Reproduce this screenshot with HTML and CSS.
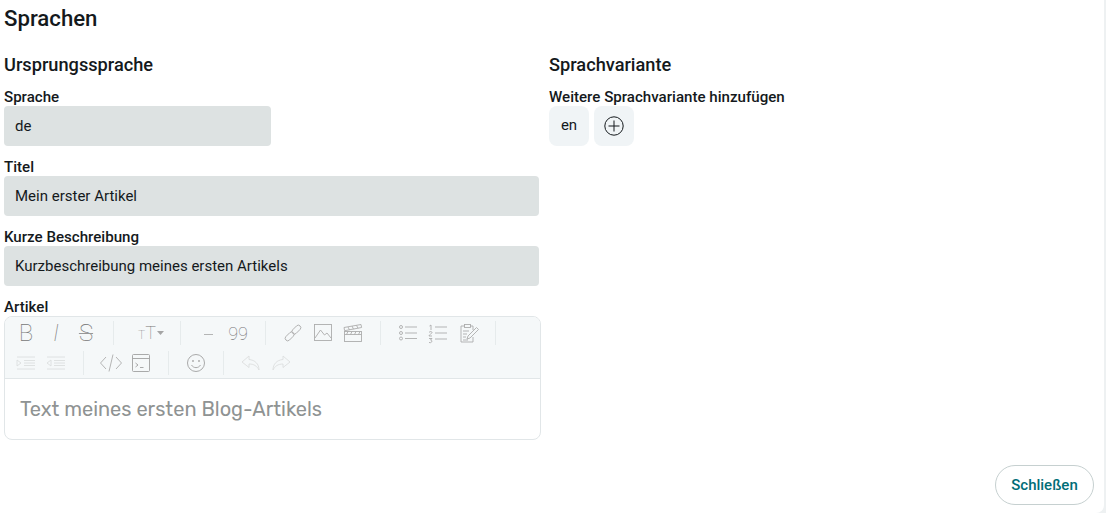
FILE: index.html
```html
<!DOCTYPE html>
<html lang="de">
<head>
<meta charset="utf-8">
<title>Sprachen</title>
<link rel="stylesheet" href="styles.css">
</head>
<body>
<main class="panel">
  <h1 class="title">Sprachen</h1>
  <div class="columns">
    <section class="col-left">
      <h2 class="section-title">Ursprungssprache</h2>
      <label class="label">Sprache</label>
      <input class="input input-short" value="de" readonly>
      <label class="label">Titel</label>
      <input class="input" value="Mein erster Artikel" readonly>
      <label class="label">Kurze Beschreibung</label>
      <input class="input" value="Kurzbeschreibung meines ersten Artikels" readonly>
      <label class="label">Artikel</label>
      <div class="editor">
        <div class="toolbar">
          <div class="group">
            <span class="btn glyph">B</span>
            <span class="btn glyph glyph-i">I</span>
            <span class="btn glyph glyph-s">S</span>
          </div>
          <div class="group">
            <span class="btn btn-wide glyph-t"><span class="t-small">T</span><span class="t-big">T</span><svg class="caret" width="7" height="4" viewBox="0 0 7 4"><path d="M0 0h7L3.500 4z" fill="#a5a5a5"/></svg></span>
          </div>
          <div class="group">
            <span class="btn"><svg class="ic" viewBox="0 0 24 24"><path d="M8 13.500h9"/></svg></span>
            <span class="btn glyph-q">99</span>
          </div>
          <div class="group">
            <span class="btn"><svg class="ic" viewBox="0 0 24 24"><g transform="rotate(-45 12 12)"><rect x="2" y="9.500" width="10.500" height="5" rx="2.500"/><rect x="11.500" y="9.500" width="10.500" height="5" rx="2.500"/></g></svg></span>
            <span class="btn"><svg class="ic" viewBox="0 0 24 24"><rect x="3.500" y="3.500" width="17" height="16"/><path d="M4 17l5.500-8 4 5 2.500-2 4 5"/></svg></span>
            <span class="btn"><svg class="ic" viewBox="0 0 24 24"><rect x="3.500" y="10.500" width="17" height="10"/><path d="M3.500 13.500h17M3 6.500l17-3 .6 3-17 3.200zM7 6l1.500 3M11 5l1.500 3.200M15.500 4.300l1.500 3M7 10.500l-1.500 3M11 10.500l-1.500 3M15 10.500l-1.500 3M19 10.500l-1.500 3"/></svg></span>
          </div>
          <div class="group">
            <span class="btn"><svg class="ic" viewBox="0 0 24 24"><circle cx="5" cy="6" r="1.500"/><circle cx="5" cy="12" r="1.500"/><circle cx="5" cy="17.500" r="1.500"/><path d="M9 6h12M9 12h12M9 17.500h12"/></svg></span>
            <span class="btn"><svg class="ic" viewBox="0 0 24 24"><path d="M3.500 5l1.500-1v5M3 11.500c1-1.500 3-1 3 0 0 1.200-3 2-3 3.500h3M3 17.500h3l-1.500 1.500c2-.2 2 3.500-1.500 2.500M9 6h12M9 12h12M9 18h12"/></svg></span>
            <span class="btn"><svg class="ic" viewBox="0 0 24 24"><path d="M17 9V5h-3M9 5H5v16h12v-5"/><rect x="8.500" y="3.500" width="6" height="3"/><path d="M7 10h6M7 13h4M7 16h3M7 19h5M11 18l1-3 8.500-8.500 2 2L14 17z"/></svg></span>
          </div>
          <div class="group">
            <span class="btn"><svg class="ic ic-faint" viewBox="0 0 24 24"><path d="M3 6h18M10 9.500h11M10 12h11M10 14.500h11M3 18h18M3 9l4 3-4 3z"/></svg></span>
            <span class="btn"><svg class="ic ic-faint" viewBox="0 0 24 24"><path d="M3 6h18M10 9.500h11M10 12h11M10 14.500h11M3 18h18M7 9l-4 3 4 3z"/></svg></span>
          </div>
          <div class="group">
            <span class="btn"><svg class="ic" viewBox="0 0 24 24"><path d="M7 6l-5.500 6L7 18M17 6l5.500 6L17 18M14 3.500L10 20.500"/></svg></span>
            <span class="btn"><svg class="ic ic-strong" viewBox="0 0 24 24"><rect x="3.500" y="3.500" width="17" height="17" rx="1"/><path d="M3.500 7.500h17M6.500 12l2.500 2-2.500 2M11 16.500h3.500"/></svg></span>
          </div>
          <div class="group">
            <span class="btn"><svg class="ic ic-strong" viewBox="0 0 24 24"><circle cx="12" cy="12" r="8.500"/><circle cx="9" cy="10" r=".6"/><circle cx="15" cy="10" r=".6"/><path d="M7.500 14c2 3.500 7 3.500 9 0"/></svg></span>
          </div>
          <div class="group group-last">
            <span class="btn"><svg class="ic ic-faint" viewBox="0 0 24 24"><path d="M10 5L3 11l7 5.500V13c5 0 8 2 10 6 0-6-4-10-10-10.500z"/></svg></span>
            <span class="btn"><svg class="ic ic-faint" viewBox="0 0 24 24"><path d="M14 5l7 6-7 5.500V13c-5 0-8 2-10 6 0-6 4-10 10-10.500z"/></svg></span>
          </div>
        </div>
        <div class="editor-body">Text meines ersten Blog-Artikels</div>
      </div>
    </section>
    <section class="col-right">
      <h2 class="section-title">Sprachvariante</h2>
      <label class="label">Weitere Sprachvariante hinzufügen</label>
      <div class="variants">
        <span class="chip chip-text">en</span>
        <span class="chip"><svg class="plus" width="20" height="20" viewBox="0 0 20 20"><circle cx="10" cy="10" r="9.200"/><path d="M10 4.500v11M4.500 10h11"/></svg></span>
      </div>
    </section>
  </div>
  <div class="footer"><button class="close">Schließen</button></div>
</main>
</body>
</html>
```
FILE: styles.css
```css
* { box-sizing: border-box; }
html, body { margin: 0; height: 513px; overflow: hidden; }
body { background: #eef1f2; font-family: "Roboto", "Liberation Sans", sans-serif; color: #14191c; }
.panel { width: 1104px; height: 513px; background: #fff; border-radius: 0 0 8px 0; padding: 5px 10px 0 4px; }
.title { margin: 0; font-size: 22.2px; line-height: 26px; font-weight: 500; }
.columns { display: flex; margin-top: 22px; }
.col-left { width: 545px; }
.col-right { flex: 1; }
.section-title { margin: 0; font-size: 18.2px; line-height: 24px; font-weight: 500; padding-bottom: 9px; }
.label { display: block; font-size: 15.1px; line-height: 22px; font-weight: 500; height: 20px; }
.input { display: block; width: 535px; height: 40px; border: 0; outline: 0; border-radius: 4px; background: #dde2e2; padding: 0 11px; margin: 0 0 10px; font: 400 15px "Roboto", sans-serif; color: #14191c; }
.input-short { width: 267px; }
.editor { width: 537px; height: 124px; border: 1px solid #e1e6e8; border-radius: 8px; overflow: hidden; }
.toolbar { display: flex; flex-wrap: wrap; height: 62px; padding: 1px 0 0 6px; background: #f5f8f9; border-bottom: 1px solid #e1e6e8; }
.group { display: flex; align-items: center; height: 30px; position: relative; padding-right: 12px; margin-right: 13px; }
.group::after { content: ""; position: absolute; right: -1px; top: 3px; bottom: 3px; width: 1px; background: #e6ebec; }
.group-last::after { display: none; }
.btn { width: 30px; height: 30px; display: flex; align-items: center; justify-content: center; color: #999; }
.btn-wide { width: 42px; padding-left: 8px; }
.ic { width: 24px; height: 24px; fill: none; stroke: #adadad; stroke-width: .9; }
.ic-faint { stroke: #dcdfdf; }
.ic-strong { stroke: #a0a0a0; }
.glyph { font: 100 24px "Roboto", sans-serif; color: #777; }
.glyph-i { font-style: italic; }
.glyph-s { text-decoration: line-through; text-decoration-thickness: 1px; text-decoration-color: #999; }
.glyph-t { font-family: "Roboto", sans-serif; font-weight: 100; color: #777; align-items: baseline; line-height: 30px; }
.t-small { font-size: 12px; }
.t-big { font-size: 18px; }
.caret { margin-left: 1px; flex: none; align-self: center; }
.glyph-q { font: 100 18px "Roboto", sans-serif; color: #777; }
.editor-body { padding: 17px 15px 0; font: 400 20px/26px "Rubik", "Inter", "Roboto", sans-serif; color: #8f9393; }
.variants { display: flex; gap: 5px; }
.chip { width: 40px; height: 40px; border-radius: 8px; background: #f0f4f6; display: flex; align-items: center; justify-content: center; font-size: 15px; }
.chip-text { padding-bottom: 2px; }
.plus { fill: none; stroke: #14191c; stroke-width: 1; }
.footer { display: flex; justify-content: flex-end; margin-top: 25px; }
.close { width: 99px; height: 40px; border: 1px solid #c6d0d0; border-radius: 20px; background: #fff; color: #006d77; font: 500 15px "Roboto", sans-serif; padding: 0; }
```
